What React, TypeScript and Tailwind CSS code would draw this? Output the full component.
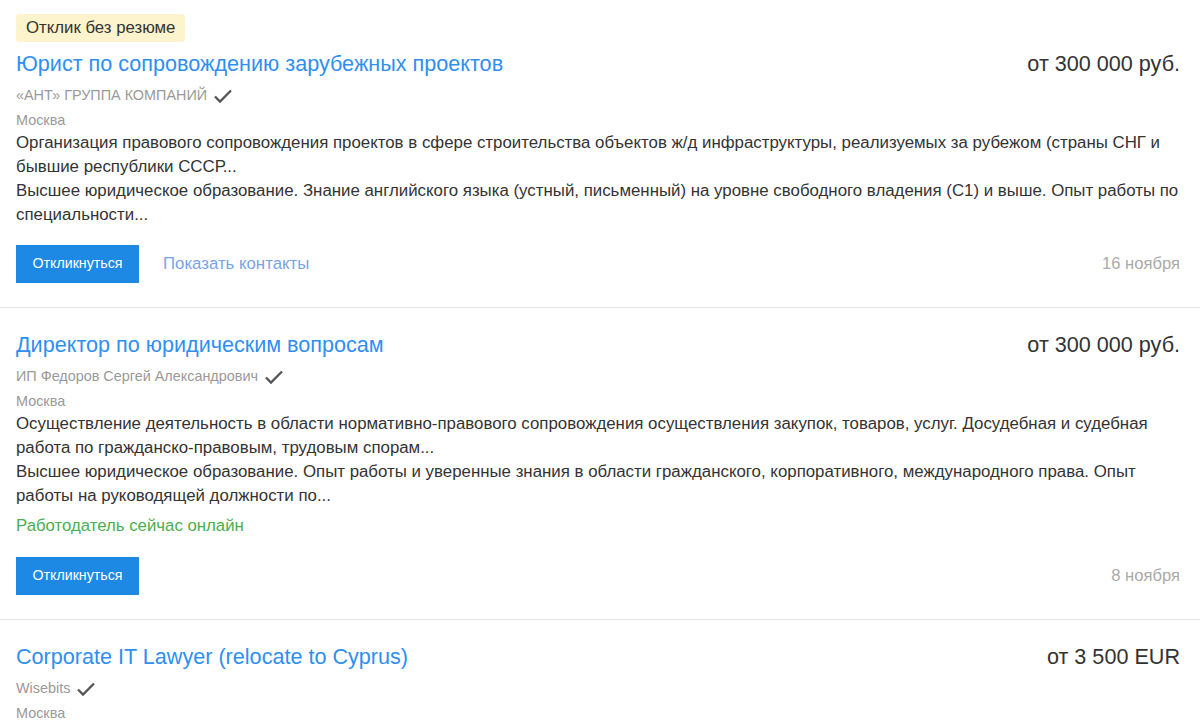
import React from 'react';

type Vacancy = {
  tag?: string;
  title: string;
  salary: string;
  company: string;
  city: string;
  description?: string[];
  online?: boolean;
  contacts?: boolean;
  date?: string;
};

const vacancies: Vacancy[] = [
  {
    tag: 'Отклик без резюме',
    title: 'Юрист по сопровождению зарубежных проектов',
    salary: 'от 300 000 руб.',
    company: '«АНТ» ГРУППА КОМПАНИЙ',
    city: 'Москва',
    description: [
      'Организация правового сопровождения проектов в сфере строительства объектов ж/д инфраструктуры, реализуемых за рубежом (страны СНГ и бывшие республики СССР...',
      'Высшее юридическое образование. Знание английского языка (устный, письменный) на уровне свободного владения (С1) и выше. Опыт работы по специальности...',
    ],
    contacts: true,
    date: '16 ноября',
  },
  {
    title: 'Директор по юридическим вопросам',
    salary: 'от 300 000 руб.',
    company: 'ИП Федоров Сергей Александрович',
    city: 'Москва',
    description: [
      'Осуществление деятельность в области нормативно-правового сопровождения осуществления закупок, товаров, услуг. Досудебная и судебная работа по гражданско-правовым, трудовым спорам...',
      'Высшее юридическое образование. Опыт работы и уверенные знания в области гражданского, корпоративного, международного права. Опыт работы на руководящей должности по...',
    ],
    online: true,
    date: '8 ноября',
  },
  {
    title: 'Corporate IT Lawyer (relocate to Cyprus)',
    salary: 'от 3 500 EUR',
    company: 'Wisebits',
    city: 'Москва',
  },
];

function Check() {
  return (
    <svg width="20" height="16" viewBox="0 0 20 16" className="ml-[6px]">
      <path d="M2 8.5 L7 13.5 L18 2.5" fill="none" stroke="#555" strokeWidth="2.3" />
    </svg>
  );
}

function VacancyCard({ v, first }: { v: Vacancy; first?: boolean }) {
  return (
    <div className={`pl-4 pr-5 pb-6 border-b border-[#e3e3e3] ${first ? 'pt-[14px]' : 'pt-6'}`}>
      {v.tag && (
        <div className="mb-[9px]">
          <span className="inline-flex h-7 items-center rounded-[3px] bg-[#fdf3cd] px-[10px] text-[16.8px] text-[#333]">
            {v.tag}
          </span>
        </div>
      )}
      <div className="flex items-center justify-between h-[26px]">
        <a className="text-[21.6px] leading-[26px] text-[#2f8ff0]">{v.title}</a>
        <span className="text-[21.6px] leading-[26px] text-[#333]">{v.salary}</span>
      </div>
      <div className="mt-[9px] flex items-center h-5 text-[14.4px] text-[#999]">
        {v.company}
        <Check />
      </div>
      <div className="mt-1 h-5 leading-5 text-[14.4px] text-[#999]">{v.city}</div>
      {v.description && (
        <div className="mt-px text-[16.85px] leading-6 text-[#333]">
          {v.description.map((d, i) => (
            <div key={i}>{d}</div>
          ))}
        </div>
      )}
      {v.online && <div className="mt-[6px] text-[16.8px] leading-6 text-[#4cae4c]">Работодатель сейчас онлайн</div>}
      {v.date && (
        <div className={`${first ? 'mt-[18px]' : 'mt-[19px]'} flex items-center`}>
          <button className="h-[38px] w-[123px] bg-[#1e88e5] text-[14.2px] text-white">Откликнуться</button>
          {v.contacts && <span className="ml-6 text-[16.8px] text-[#7aa3e6]">Показать контакты</span>}
          <span className="ml-auto text-[16.6px] text-[#aaa]">{v.date}</span>
        </div>
      )}
    </div>
  );
}

export default function App() {
  return (
    <div className="w-[1200px] h-[725px] overflow-hidden bg-white font-['Liberation_Sans',Arial,sans-serif]">
      {vacancies.map((v, i) => (
        <VacancyCard key={i} v={v} first={i === 0} />
      ))}
    </div>
  );
}
